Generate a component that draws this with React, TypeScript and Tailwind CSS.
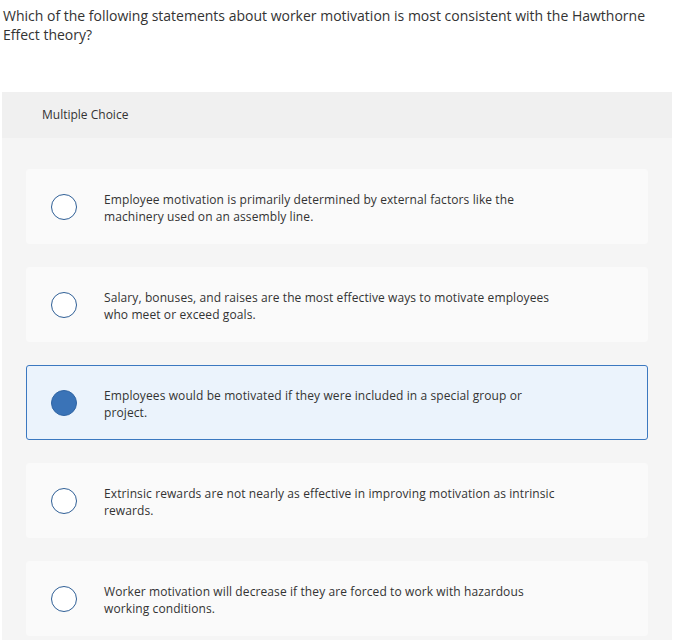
import React, { useState } from 'react';

const choices = [
    ['Employee motivation is primarily determined by external factors like the', 'machinery used on an assembly line.'],
    ['Salary, bonuses, and raises are the most effective ways to motivate employees', 'who meet or exceed goals.'],
    ['Employees would be motivated if they were included in a special group or', 'project.'],
    ['Extrinsic rewards are not nearly as effective in improving motivation as intrinsic', 'rewards.'],
    ['Worker motivation will decrease if they are forced to work with hazardous', 'working conditions.'],
];

const App: React.FC = () => {
    const [selected, setSelected] = useState(2);

    return (
        <div className="min-h-screen bg-white text-[#333] font-['Open_Sans','Liberation_Sans',sans-serif]">
            <p className="pl-[3px] pt-[6px] pr-4 text-[14px] leading-[19px] text-[#333]">
                Which of the following statements about worker motivation is most consistent with the Hawthorne
                <br />
                Effect theory?
            </p>
            <div className="mt-[48px] ml-[2px] w-[670px] bg-[#f5f5f5] pb-[4px]">
                <div className="h-[46px] bg-[#f0f0f0] pl-[40px] flex items-center text-[12px] text-[#333]">
                    Multiple Choice
                </div>
                <div className="px-[24px] pt-[31px] flex flex-col gap-[23px]">
                    {choices.map((lines, i) => {
                        const active = i === selected;
                        return (
                            <button
                                key={i}
                                onClick={() => setSelected(i)}
                                className={
                                    active
                                        ? 'h-[75px] rounded-[3px] border border-[#3b78c0] bg-[#ebf3fc] flex items-center text-left'
                                        : 'h-[75px] rounded-[3px] border border-[#fafafa] bg-[#fafafa] flex items-center text-left'
                                }
                            >
                                <span className="ml-[24px] w-[26px] h-[26px] shrink-0">
                                    {active ? (
                                        <span className="block w-[26px] h-[26px] rounded-full bg-[#3a73b7] border border-[#2f64a3]" />
                                    ) : (
                                        <span className="block w-[26px] h-[26px] rounded-full bg-white border-[1.5px] border-[#2f5f96]" />
                                    )}
                                </span>
                                <span className="ml-[27px] pt-[3px] text-[12px] leading-[17px] tracking-[0.1px] text-[#333] whitespace-nowrap">
                                    {lines[0]}
                                    <br />
                                    {lines[1]}
                                </span>
                            </button>
                        );
                    })}
                </div>
            </div>
        </div>
    );
};

export default App;
